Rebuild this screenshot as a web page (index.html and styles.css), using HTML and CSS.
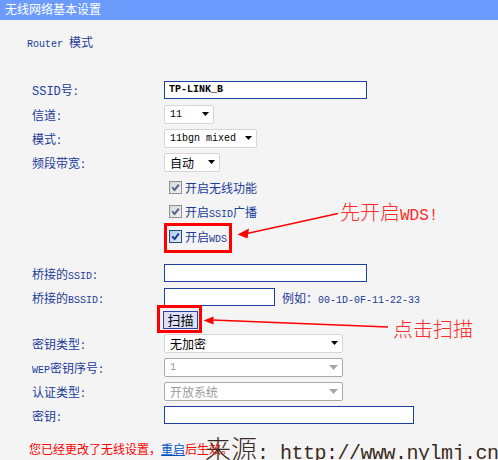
FILE: index.html
```html
<!DOCTYPE html>
<html lang="zh-CN">
<head>
<meta charset="utf-8">
<title>无线网络基本设置</title>
<link rel="stylesheet" href="styles.css">
</head>
<body>
<div class="page">
  <div class="header">无线网络基本设置</div>
  <div class="mode"><span class="lat">Router</span> 模式</div>

  <div class="form">
    <div class="row">
      <span class="label"><span class="wide">SSID</span>号:</span>
      <span class="input w-long text">TP-LINK_B</span>
    </div>
    <div class="row">
      <span class="label">信道:</span>
      <span class="select w-ch"><span class="lat">11</span><svg class="caret" width="7" height="4" viewBox="0 0 7 4"><path d="M0 0H7L3.5 4Z"/></svg></span>
    </div>
    <div class="row">
      <span class="label">模式:</span>
      <span class="select w-mode"><span class="lat">11bgn mixed</span><svg class="caret" width="7" height="4" viewBox="0 0 7 4"><path d="M0 0H7L3.5 4Z"/></svg></span>
    </div>
    <div class="row">
      <span class="label">频段带宽:</span>
      <span class="select w-bw">自动<svg class="caret" width="7" height="4" viewBox="0 0 7 4"><path d="M0 0H7L3.5 4Z"/></svg></span>
    </div>

    <div class="row check first">
      <span class="label"></span>
      <span class="cb"><svg width="9" height="9" viewBox="0 0 9 9"><path d="M1.2 4.4L3.6 7L7.8 1.6" /></svg></span>
      <span class="cb-text">开启无线功能</span>
    </div>
    <div class="row check">
      <span class="label"></span>
      <span class="cb"><svg width="9" height="9" viewBox="0 0 9 9"><path d="M1.2 4.4L3.6 7L7.8 1.6" /></svg></span>
      <span class="cb-text">开启<span class="lat">SSID</span>广播</span>
    </div>
    <div class="row check wds">
      <span class="label"></span>
      <span class="cb on"><svg width="9" height="9" viewBox="0 0 9 9"><path d="M1.2 4.4L3.6 7L7.8 1.6" /></svg></span>
      <span class="cb-text">开启<span class="lat">WDS</span></span>
    </div>

    <div class="row bridge">
      <span class="label">桥接的<span class="lat">SSID</span>:</span>
      <span class="input w-long"></span>
    </div>
    <div class="row">
      <span class="label">桥接的<span class="lat">BSSID</span>:</span>
      <span class="input w-mac"></span>
      <span class="hint">例如：<span class="lat">00-1D-0F-11-22-33</span></span>
    </div>
    <div class="row scan">
      <span class="label"></span>
      <button class="btn" type="button">扫描</button>
    </div>
    <div class="row">
      <span class="label">密钥类型:</span>
      <span class="select w-key">无加密<svg class="caret" width="7" height="4" viewBox="0 0 7 4"><path d="M0 0H7L3.5 4Z"/></svg></span>
    </div>
    <div class="row">
      <span class="label"><span class="lat">WEP</span>密钥序号:</span>
      <span class="select w-key disabled"><span class="lat">1</span><svg class="caret" width="9" height="5" viewBox="0 0 9 5"><path d="M0 0H9L4.5 5Z"/></svg></span>
    </div>
    <div class="row">
      <span class="label">认证类型:</span>
      <span class="select w-key disabled">开放系统<svg class="caret" width="9" height="5" viewBox="0 0 9 5"><path d="M0 0H9L4.5 5Z"/></svg></span>
    </div>
    <div class="row">
      <span class="label">密钥:</span>
      <span class="input w-pass"></span>
    </div>
  </div>

  <p class="notice">您已经更改了无线设置，<a class="link" href="#">重启</a>后生效。</p>

  <!-- annotations overlaid on the screenshot -->
  <div class="mark mark-wds"></div>
  <div class="mark mark-scan"></div>
  <svg class="arrows" width="498" height="460" viewBox="0 0 498 460">
    <path d="M247 233.5L338 213.5" />
    <polygon points="237.5,234.5 249,228.5 247.5,238.5" />
    <path d="M212 320L388 327" />
    <polygon points="203.5,320.5 213.5,316.5 213.5,324.5" />
  </svg>
  <div class="note note-wds">先开启<span class="note-lat">WDS!</span></div>
  <div class="note note-scan">点击扫描</div>
  <div class="watermark"><span class="wm-cjk">来源</span><span class="wm-lat">: http://www.nylmj.cn</span></div>
</div>
</body>
</html>
```

FILE: styles.css
```css
html, body {
  margin: 0;
  padding: 0;
}

body {
  width: 498px;
  height: 460px;
  overflow: hidden;
  background: #f4f4f4;
  font-family: "Noto Sans Mono CJK SC", "Noto Sans CJK SC", monospace;
  font-size: 12px;
  color: #1b3c98;
}

.page {
  position: relative;
  width: 498px;
  height: 460px;
}

.lat {
  font-family: "Liberation Mono", monospace;
  font-size: 10px;
}

.wide {
  font-family: "Liberation Mono", monospace;
  font-size: 12px;
}

.header {
  height: 20px;
  line-height: 18px;
  padding-left: 5px;
  background: #6a9bfd;
  color: #ffffff;
  font-family: "Noto Sans CJK SC", sans-serif;
  font-size: 12px;
}

.mode {
  margin: 14px 0 0 27px;
  height: 16px;
  line-height: 16px;
}

.form {
  margin-top: 28px;
  padding-left: 32px;
}

.row {
  display: flex;
  align-items: center;
  height: 24px;
}

.label {
  flex: none;
  width: 132px;
  white-space: nowrap;
}

.input {
  box-sizing: border-box;
  display: block;
  height: 18px;
  background: #ffffff;
  border: 1px solid #1d3fa3;
}

.input.text {
  padding-left: 4px;
  line-height: 16px;
  color: #000000;
  font-family: "Liberation Mono", monospace;
  font-size: 10px;
  font-weight: bold;
}

.w-long { width: 203px; }
.w-mac { width: 111px; }
.w-pass { width: 250px; }

.select {
  box-sizing: border-box;
  display: flex;
  align-items: center;
  justify-content: space-between;
  height: 19px;
  padding: 0 4px 0 5px;
  background: #ffffff;
  border: 1px solid #d6d6d6;
  border-radius: 2px;
  color: #000000;
  white-space: nowrap;
}

.select .lat {
  font-size: 10px;
}

.caret {
  flex: none;
  fill: #000000;
}

.select.disabled {
  border-color: #a9a9a9;
  color: #9a9a9a;
}

.select.disabled .caret {
  fill: #a6a6a6;
}

.w-ch { width: 50px; }
.w-mode { width: 93px; }
.w-bw { width: 56px; }
.w-key { width: 179px; }

.check.first {
  margin-top: 1px;
}

.check.wds {
  margin-top: 1px;
}

.cb {
  box-sizing: border-box;
  flex: none;
  display: flex;
  align-items: center;
  justify-content: center;
  width: 13px;
  height: 13px;
  margin-left: 5px;
  border: 1px solid #8f9095;
  background: linear-gradient(135deg, #d6d7d9, #f1f1f2);
}

.cb svg path {
  fill: none;
  stroke: #55638c;
  stroke-width: 2;
}

.cb.on {
  border-color: #1f4f7f;
  background: linear-gradient(135deg, #a9c9ec, #e4eefa);
}

.cb.on svg path {
  stroke: #1c3d8c;
}

.cb-text {
  margin-left: 3px;
  white-space: nowrap;
}

.row.bridge {
  margin-top: 13px;
}

.hint {
  margin-left: 7px;
  white-space: nowrap;
}

.row.scan {
  height: 22px;
}

.btn {
  box-sizing: border-box;
  width: 35px;
  height: 18px;
  margin: 0 0 0 -1px;
  padding: 0;
  background: #dde0f8;
  border: 1px solid #2b40a0;
  color: #000000;
  font-family: "Noto Sans CJK SC", sans-serif;
  font-size: 13px;
  line-height: 16px;
}

.notice {
  margin: 15px 0 0 29px;
  height: 14px;
  line-height: 14px;
  color: #ff0000;
  white-space: nowrap;
}

.link {
  color: #0052c4;
  text-decoration: underline;
}

/* annotations */
.mark {
  position: absolute;
  box-sizing: border-box;
  border: 3px solid #ff0000;
}

.mark-wds {
  left: 164px;
  top: 223px;
  width: 68px;
  height: 30px;
}

.mark-scan {
  left: 157px;
  top: 305px;
  width: 45px;
  height: 28px;
}

.arrows {
  position: absolute;
  left: 0;
  top: 0;
  pointer-events: none;
}

.arrows path {
  fill: none;
  stroke: #ff0000;
  stroke-width: 1.3;
}

.arrows polygon {
  fill: #ff0000;
}

.note {
  position: absolute;
  color: #ff2a2a;
  font-family: "Noto Sans CJK SC", sans-serif;
  font-weight: 300;
  font-size: 20px;
  line-height: 24px;
  white-space: nowrap;
}

.note-lat {
  font-family: "Liberation Mono", monospace;
  font-size: 16px;
}

.note-wds {
  left: 340px;
  top: 200px;
}

.note-scan {
  left: 393px;
  top: 317px;
}

.watermark {
  position: absolute;
  left: 205px;
  top: 434px;
  color: #3a2b22;
  white-space: nowrap;
  line-height: 28px;
}

.wm-cjk {
  font-family: "Noto Sans CJK SC", sans-serif;
  font-weight: 300;
  font-size: 26px;
}

.wm-lat {
  font-family: "Liberation Mono", monospace;
  font-size: 20px;
  letter-spacing: -0.5px;
}
```
